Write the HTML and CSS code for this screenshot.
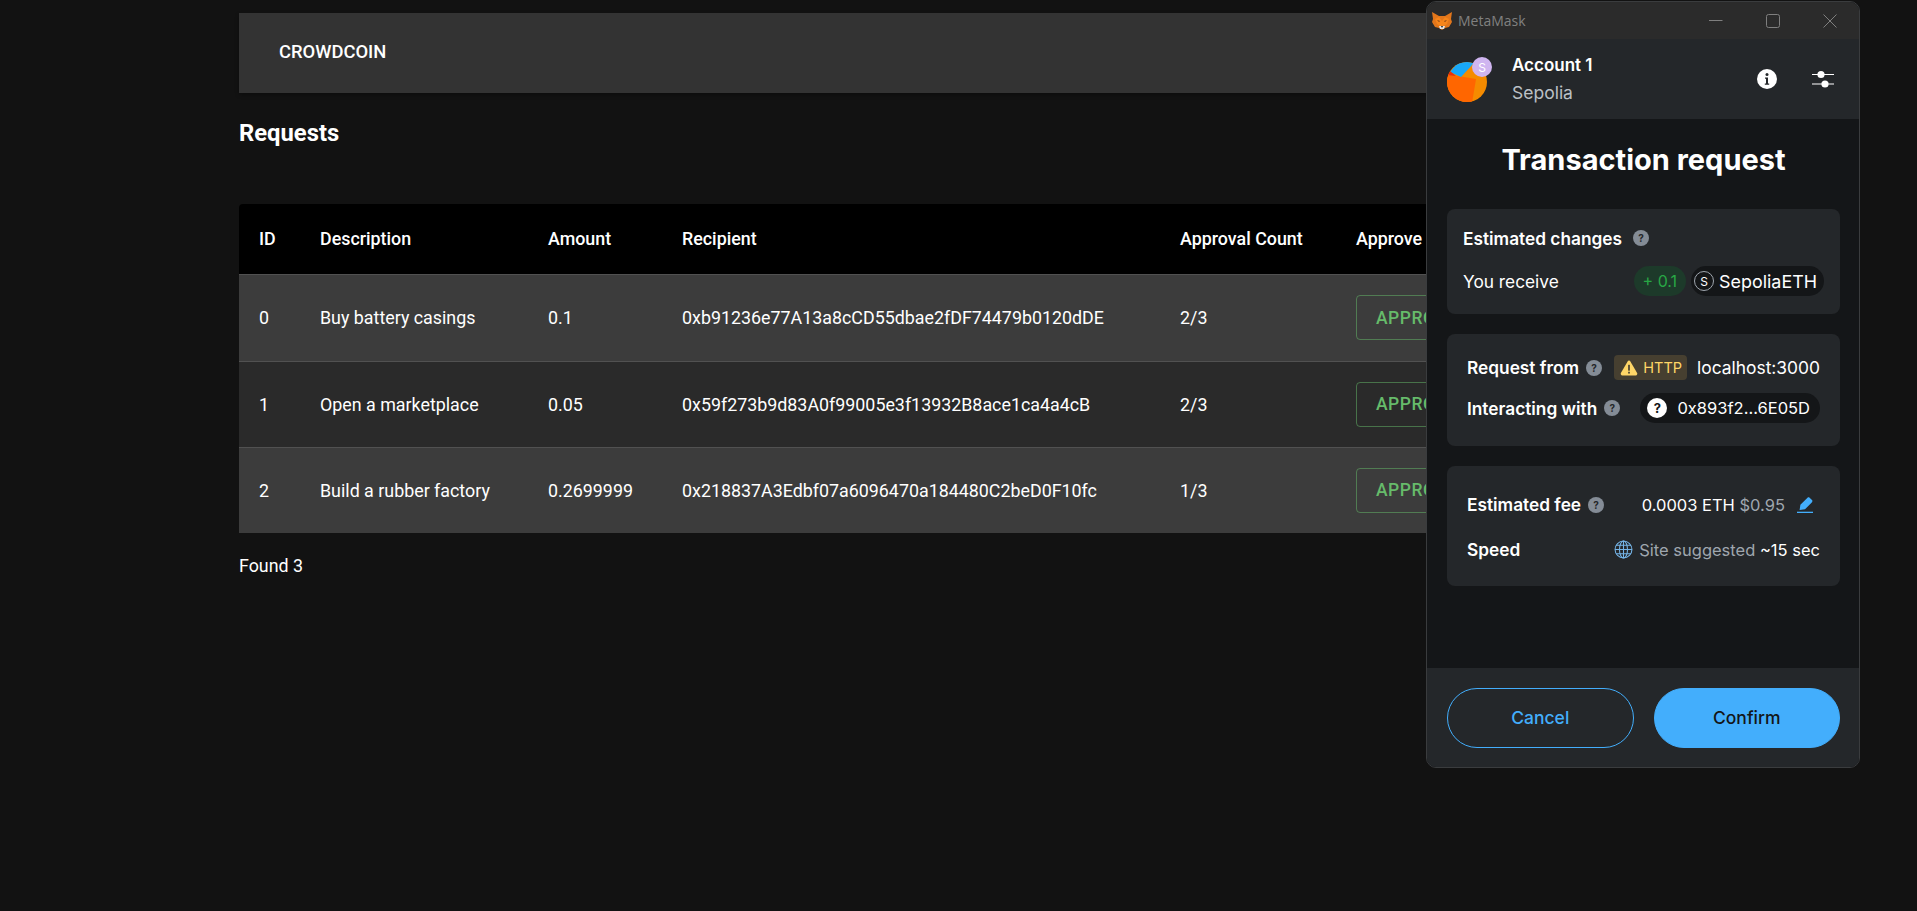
FILE: index.html
```html
<!DOCTYPE html>
<html lang="en">
<head>
<meta charset="utf-8">
<title>Crowdcoin Requests</title>
<link rel="stylesheet" href="styles.css">
</head>
<body>
<div class="page">
  <header class="appbar"><span class="brand">CROWDCOIN</span></header>
  <h1 class="page-title">Requests</h1>
  <table class="requests">
    <colgroup>
      <col class="c-id"><col class="c-desc"><col class="c-amount"><col class="c-recip"><col class="c-count"><col class="c-approve">
    </colgroup>
    <thead>
      <tr><th>ID</th><th>Description</th><th>Amount</th><th>Recipient</th><th>Approval Count</th><th>Approve</th></tr>
    </thead>
    <tbody>
      <tr class="row-odd"><td>0</td><td>Buy battery casings</td><td>0.1</td><td>0xb91236e77A13a8cCD55dbae2fDF74479b0120dDE</td><td>2/3</td><td><button class="approve">APPROVE</button></td></tr>
      <tr class="row-even"><td>1</td><td>Open a marketplace</td><td>0.05</td><td>0x59f273b9d83A0f99005e3f13932B8ace1ca4a4cB</td><td>2/3</td><td><button class="approve">APPROVE</button></td></tr>
      <tr class="row-odd"><td>2</td><td>Build a rubber factory</td><td>0.2699999</td><td>0x218837A3Edbf07a6096470a184480C2beD0F10fc</td><td>1/3</td><td><button class="approve">APPROVE</button></td></tr>
    </tbody>
  </table>
  <p class="found">Found 3</p>
</div>

<section class="mm-window">
  <div class="titlebar">
    <svg class="fox" viewBox="0 0 20 18"><polygon fill="#e2761b" points="0,0 7,4 13,4 20,0 19,7 20,10 17,15 13,16 10,18 7,16 3,15 0,10 1,7"/><polygon fill="#f6851b" points="3,7 7,5 10,9 13,5 17,7 15,12 12,14 8,14 5,12"/><polygon fill="#e4e0dc" points="7,14 13,14 12,17 8,17"/><polygon fill="#1a1a1a" points="9,14 11,14 10,16"/><polygon fill="#763d16" points="5,8 8,9 7,10"/><polygon fill="#763d16" points="15,8 12,9 13,10"/></svg>
    <span class="titlebar-name">MetaMask</span>
    <div class="win-controls">
      <svg class="win-icon" viewBox="0 0 14 14"><path d="M0 6.5h13.5" stroke="#7f7f7f" stroke-width="1" fill="none"/></svg>
      <svg class="win-icon" viewBox="0 0 14 14"><rect x="0.5" y="0.5" width="13" height="13" rx="2" stroke="#7f7f7f" stroke-width="1" fill="none"/></svg>
      <svg class="win-icon" viewBox="0 0 14 14"><path d="M0.5 0.5l13 13M13.5 0.5l-13 13" stroke="#7f7f7f" stroke-width="1" fill="none"/></svg>
    </div>
  </div>

  <div class="account-bar">
    <div class="avatar">
      <svg class="avatar-disc" viewBox="0 0 40 40">
        <circle cx="20" cy="20" r="20" fill="#f58b00"/>
        <clipPath id="disc"><circle cx="20" cy="20" r="20"/></clipPath>
        <g clip-path="url(#disc)">
          <polygon fill="#ff6600" points="-2,12 29,17 25,41 -2,41"/>
          <polygon fill="#18a8f8" points="3,10 14,15 27,1 13,-2"/>
          <polygon fill="#e8300a" points="0,11 3,9 9,14 0,13"/>
        </g>
      </svg>
      <span class="avatar-badge">S</span>
    </div>
    <div class="account-text">
      <span class="account-name">Account 1</span>
      <span class="account-net">Sepolia</span>
    </div>
    <svg class="info-icon" viewBox="0 0 20 20"><circle cx="10" cy="10" r="10" fill="#fff"/><circle cx="10" cy="5.6" r="1.5" fill="#24272a"/><path d="M8 8.4h3v6h1.2v1.4H7.8v-1.4H9V9.8H8z" fill="#24272a"/></svg>
    <svg class="slider-icon" viewBox="0 0 22 20"><path d="M0 5.5h22M0 15h22" stroke="#fff" stroke-width="1.2"/><circle cx="9" cy="5.5" r="3.6" fill="#fff"/><circle cx="13" cy="15" r="3.6" fill="#fff"/></svg>
  </div>

  <div class="mm-body">
    <h2 class="mm-title">Transaction request</h2>

    <div class="card card-changes">
      <div class="line line-changes-head"><strong class="label">Estimated changes</strong><span class="help help-wide">?</span></div>
      <div class="line line-between">
        <span class="receive">You receive</span>
        <div class="pills">
          <span class="pill pill-green">+ 0.1</span>
          <span class="pill pill-dark"><span class="token-s">S</span><span class="token-name">SepoliaETH</span></span>
        </div>
      </div>
    </div>

    <div class="card card-request">
      <div class="line line-between">
        <span class="label-group"><strong class="label">Request from</strong><span class="help">?</span></span>
        <span class="value-group">
          <span class="http-badge"><svg class="warn" viewBox="0 0 16 15"><path d="M8 .5c.6 0 1 .3 1.3.8l6.3 11c.5 1-.1 2.2-1.3 2.2H1.7C.5 14.500-.1 13.300.4 12.300l6.300-11C7 .8 7.400.5 8 .5z" fill="#ffd667"/><rect x="7.200" y="4.500" width="1.600" height="5.500" fill="#4a4230"/><rect x="7.200" y="11" width="1.600" height="1.700" fill="#4a4230"/></svg>HTTP</span>
          <span class="host">localhost:3000</span>
        </span>
      </div>
      <div class="line line-between line-interact">
        <span class="label-group"><strong class="label">Interacting with</strong><span class="help">?</span></span>
        <span class="pill pill-dark pill-address"><span class="token-q">?</span>0x893f2...6E05D</span>
      </div>
    </div>

    <div class="card card-fee">
      <div class="line line-between">
        <span class="label-group"><strong class="label">Estimated fee</strong><span class="help">?</span></span>
        <span class="value-group fee-value">
          <span>0.0003 ETH <span class="muted">$0.95</span></span>
          <svg class="pencil" viewBox="0 0 16 16"><path d="M10.500 .8c.6-.6 1.500-.6 2.100 0l2.400 2.300c.6.6.6 1.500 0 2.100l-7 7-5.400 .8 .8-5.300z" fill="#43aefc"/><rect x="0" y="14.700" width="16" height="1.300" fill="#43aefc"/></svg>
        </span>
      </div>
      <div class="line line-between line-speed">
        <strong class="label">Speed</strong>
        <span class="value-group speed-value">
          <svg class="globe" viewBox="0 0 18 18"><g fill="none" stroke="#75b5e8" stroke-width="1"><circle cx="9" cy="9" r="8"/><ellipse cx="9" cy="9" rx="3.800" ry="8"/><path d="M1 9h16M2 5h14M2 13h14M9 1v16"/></g></svg>
          <span><span class="muted">Site suggested</span> ~15 sec</span>
        </span>
      </div>
    </div>
  </div>

  <footer class="mm-footer">
    <button class="mm-btn mm-cancel">Cancel</button>
    <button class="mm-btn mm-confirm">Confirm</button>
  </footer>
</section>
</body>
</html>
```

FILE: styles.css
```css
* { box-sizing: border-box; }
html, body { height: 100%; }
body {
  margin: 0;
  background: #121212;
  color: #fff;
  font-family: Roboto, "Liberation Sans", sans-serif;
  font-size: 17.85px;
  overflow: hidden;
}
.page { width: 1439px; margin: 0 auto; padding-top: 13px; }
.appbar {
  height: 80px;
  background: #333;
  display: flex;
  align-items: center;
  padding-left: 40px;
  box-shadow: 0 2px 4px rgba(0,0,0,.3);
}
.brand { font-size: 18.4px; font-weight: 500; padding-bottom: 4px; }
.page-title { margin: 24px 0 55px; font-size: 23.8px; font-weight: 700; line-height: 32px; }
.requests {
  width: 100%;
  table-layout: fixed;
  border-collapse: collapse;
  border-radius: 4px 4px 0 0;
  overflow: hidden;
}
.c-id { width: 61px; }
.c-desc { width: 228px; }
.c-amount { width: 134px; }
.c-recip { width: 498px; }
.c-count { width: 176px; }
.requests th, .requests td { padding: 0 0 0 20px; text-align: left; white-space: nowrap; overflow: hidden; }
.requests th { background: #000; height: 70px; font-weight: 500; }
.requests td { height: 86px; border-top: 1px solid #515151; font-weight: 400; }
.requests tbody tr:first-child td { height: 87px; }
.row-odd td { background: #3c3c3c; }
.row-even td { background: #2a2a2a; }
.approve {
  font: 500 17.5px Roboto, sans-serif;
  letter-spacing: .5px;
  color: #66bb6a;
  background: transparent;
  border: 1px solid rgba(102,187,106,.5);
  border-radius: 4px;
  height: 45px;
  padding: 0 19px;
}
.found { margin: 24px 0 0; line-height: 18px; }

.mm-window {
  position: absolute;
  left: 1426px;
  top: 1px;
  width: 434px;
  height: 767px;
  display: flex;
  flex-direction: column;
  border: 1px solid #3a3c3e;
  border-radius: 10px;
  overflow: hidden;
  background: #141618;
  font-family: Inter, "Liberation Sans", sans-serif;
}
.titlebar {
  height: 37px;
  flex: none;
  background: #2b2b2b;
  display: flex;
  align-items: center;
  padding-left: 5px;
}
.fox { width: 20px; height: 18px; margin-right: 6px; }
.titlebar-name { font: 400 14px "Open Sans", sans-serif; color: #808080; }
.win-controls { margin-left: auto; display: flex; gap: 43px; padding-right: 22px; }
.win-icon { width: 14px; height: 14px; display: block; }

.account-bar {
  height: 80px;
  flex: none;
  background: #24272a;
  display: flex;
  align-items: center;
  padding: 0 25px 0 20px;
}
.avatar { position: relative; width: 40px; height: 40px; margin-top: 6px; }
.avatar-disc { width: 40px; height: 40px; display: block; }
.avatar-badge {
  position: absolute;
  left: 25px; top: -5px;
  width: 20px; height: 20px;
  border-radius: 50%;
  background: #cfb5f0;
  color: #fff;
  font-size: 12px;
  display: flex; align-items: center; justify-content: center;
}
.account-text { margin-left: 25px; display: flex; flex-direction: column; gap: 8px; line-height: 20px; }
.account-name { font-weight: 600; font-size: 17px; }
.account-net { color: #bbc0c5; font-size: 17.5px; }
.info-icon { width: 20px; height: 20px; margin-left: auto; }
.slider-icon { width: 22px; height: 20px; margin-left: 35px; }

.mm-body { flex: 1; padding: 0 19px 0 20px; font-size: 16.5px; }
.mm-title { margin: 23px 0 31px; text-align: center; font-size: 29px; line-height: 36px; font-weight: 700; }
.card { background: #24272a; border-radius: 8px; margin-bottom: 20px; }
.card-changes { height: 105px; padding: 19px 16px 0; }
.card-request { height: 112px; padding: 21px 20px 0; }
.card-fee { height: 120px; padding: 28px 20px 0; }
.line { display: flex; align-items: center; }
.line-between { justify-content: space-between; }
.line-changes-head { gap: 11px; height: 20px; margin-bottom: 18px; }
.label { font-weight: 600; font-size: 17.3px; }
.receive { font-size: 17.3px; }
.help {
  width: 16px; height: 16px;
  border-radius: 50%;
  background: #848c96;
  color: #24272a;
  font-size: 10px; font-weight: 700;
  display: inline-flex; align-items: center; justify-content: center;
}
.label-group { display: inline-flex; align-items: center; gap: 7px; }
.value-group { display: inline-flex; align-items: center; }
.pills { display: flex; gap: 5px; }
.pill { height: 30px; border-radius: 15px; display: inline-flex; align-items: center; }
.pill-green { background: #1d3a2a; color: #28a745; padding: 0 9px; font-size: 16px; }
.pill-dark { background: #141618; padding: 0 7px 0 3px; }
.token-name { font-size: 17.9px; }
.token-s {
  width: 20px; height: 20px; border-radius: 50%;
  border: 1px solid #9fa6ae;
  font-size: 12px;
  display: inline-flex; align-items: center; justify-content: center;
  margin-right: 5px;
}
.token-q {
  width: 20px; height: 20px; border-radius: 50%;
  background: #fff; color: #141618;
  font-size: 13px; font-weight: 700;
  display: inline-flex; align-items: center; justify-content: center;
  margin: 0 10px 0 4px;
}
.pill-address { padding-right: 10px; }
.http-badge {
  height: 25px; padding: 0 5px 0 6px;
  background: #463f30;
  border-radius: 4px;
  color: #ffd667;
  display: inline-flex; align-items: center; gap: 5px;
  margin-right: 10px;
  font-size: 14.5px;
}
.warn { width: 18px; height: 16px; }
.host { font-size: 17.4px; }
.line-interact { margin-top: 13px; }
.fee-value { gap: 12px; padding-right: 7px; }
.muted { color: #9fa6ae; }
.pencil { width: 16px; height: 16px; }
.line-speed { margin-top: 24px; }
.speed-value { gap: 6px; }
.globe { width: 19px; height: 19px; }

.mm-footer {
  height: 99px;
  flex: none;
  background: #24272a;
  display: flex;
  gap: 20px;
  padding: 20px 19px 0 20px;
}
.mm-btn {
  flex: 1;
  height: 60px;
  border-radius: 30px;
  padding-bottom: 3px;
  font: 500 17.5px Inter, sans-serif;
}
.mm-cancel { background: transparent; border: 1px solid #43aefc; color: #43aefc; }
.mm-confirm { background: #43aefc; border: 1px solid #43aefc; color: #141618; }
```
